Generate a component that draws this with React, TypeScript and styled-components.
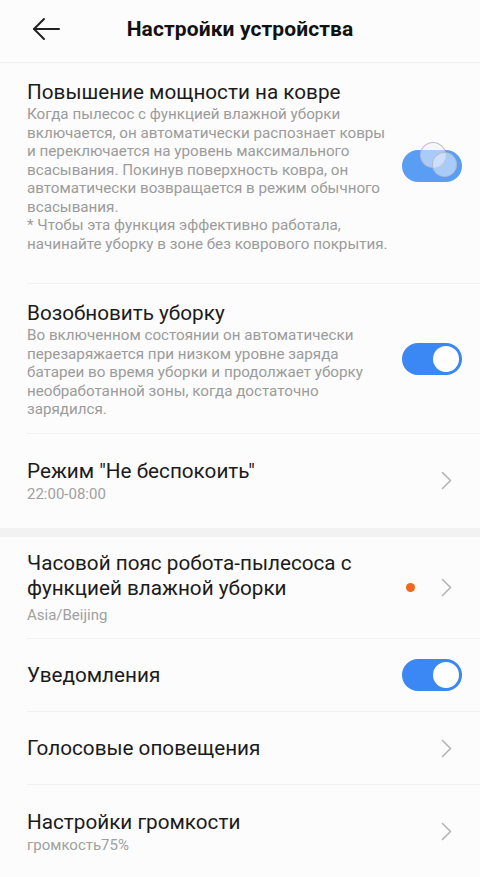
import React from "react";
import styled, { createGlobalStyle } from "styled-components";

const Global = createGlobalStyle`
  html, body { margin: 0; padding: 0; background: #fcfcfc; }
  body { font-family: Roboto, "Noto Sans", "Liberation Sans", sans-serif; -webkit-font-smoothing: antialiased; }
  * { box-sizing: border-box; }
`;

const Page = styled.div`
  width: 480px;
  min-height: 877px;
  background: #fcfcfc;
  overflow: hidden;
`;

const Header = styled.header`
  height: 63px;
  display: grid;
  grid-template-columns: 80px 1fr 80px;
  align-items: center;
  border-bottom: 1px solid #efefef;
`;

const BackButton = styled.button`
  border: 0;
  background: none;
  padding: 0 0 4px 32px;
  display: flex;
  align-items: center;
  cursor: pointer;
`;

const HeaderTitle = styled.h1`
  margin: 0 0 4px;
  text-align: center;
  font-size: 21px;
  font-weight: 700;
  color: #111;
  letter-spacing: 0.1px;
`;

const Row = styled.div<{ $pt?: number; $pb?: number; $divider?: boolean; $h?: number }>`
  display: flex;
  align-items: center;
  padding: ${(p) => p.$pt ?? 0}px 18px ${(p) => p.$pb ?? 0}px 27px;
  min-height: ${(p) => (p.$h ? `${p.$h}px` : "auto")};
  position: relative;
  &::after {
    content: "";
    display: ${(p) => (p.$divider ? "block" : "none")};
    position: absolute;
    left: 27px;
    right: 0;
    bottom: 0;
    height: 1px;
    background: #f1f1f1;
  }
`;

const TextCol = styled.div`
  flex: 1;
  min-width: 0;
`;

const Title = styled.div<{ $lh?: number }>`
  font-size: 20.7px;
  line-height: ${(p) => p.$lh ?? 26}px;
  color: #1b1b1b;
  white-space: nowrap;
`;

const Desc = styled.div`
  font-size: 15.2px;
  line-height: 18.5px;
  color: #9b9b9b;
  white-space: nowrap;
`;

const Sub = styled.div<{ $mt?: number }>`
  font-size: 15px;
  line-height: 18px;
  color: #a0a0a0;
  margin-top: ${(p) => p.$mt ?? 1}px;
`;

const Trailing = styled.div`
  display: flex;
  align-items: center;
  gap: 26px;
  flex-shrink: 0;
`;

const Track = styled.span<{ $faded?: boolean }>`
  position: relative;
  display: inline-block;
  width: 60px;
  height: 32px;
  border-radius: 16px;
  background: ${(p) => (p.$faded ? "#5a9df4" : "#3b87f3")};
`;

const Knob = styled.span<{ $x: number; $y: number; $ghost?: boolean; $size?: number }>`
  position: absolute;
  left: ${(p) => p.$x}px;
  top: ${(p) => p.$y}px;
  width: ${(p) => p.$size ?? 26}px;
  height: ${(p) => p.$size ?? 26}px;
  border-radius: 50%;
  background: ${(p) => (p.$ghost ? "rgba(235,241,252,0.55)" : "#ffffff")};
  border: ${(p) => (p.$ghost ? "1.8px solid rgba(180,180,195,0.85)" : "none")};
`;

const Dot = styled.span`
  width: 9px;
  height: 9px;
  border-radius: 50%;
  background: #f2661c;
`;

const ChevronWrap = styled.span`
  display: flex;
  margin-right: 10px;
`;

const Band = styled.div`
  height: 9px;
  background: #f2f2f2;
`;

const Toggle = ({ transition }: { transition?: boolean }) =>
  transition ? (
    <Track $faded>
      <Knob $ghost $x={18} $y={-8} $size={26} />
      <Knob $ghost $x={30} $y={2} $size={25} />
    </Track>
  ) : (
    <Track>
      <Knob $x={31} $y={3} />
    </Track>
  );

const Chevron = () => (
  <ChevronWrap>
    <svg width="11" height="19" viewBox="0 0 11 19" fill="none">
      <polyline points="1.5,1.5 9.5,9.5 1.5,17.5" stroke="#b3b3b3" strokeWidth="1.6" strokeLinecap="round" strokeLinejoin="round" />
    </svg>
  </ChevronWrap>
);

const BackArrow = () => (
  <svg width="28" height="24" viewBox="0 0 28 24" fill="none">
    <line x1="2" y1="12" x2="27" y2="12" stroke="#222" strokeWidth="2" strokeLinecap="round" />
    <polyline points="12,2 2,12 12,22" stroke="#222" strokeWidth="2" strokeLinecap="round" strokeLinejoin="round" />
  </svg>
);

const Lines = ({ lines }: { lines: string[] }) => (
  <>
    {lines.map((l, i) => (
      <Desc key={i}>{l}</Desc>
    ))}
  </>
);

export default function App() {
  return (
    <Page>
      <Global />
      <Header>
        <BackButton aria-label="back">
          <BackArrow />
        </BackButton>
        <HeaderTitle>Настройки устройства</HeaderTitle>
        <span />
      </Header>

      <Row $pt={16} $pb={31} $divider>
        <TextCol>
          <Title>Повышение мощности на ковре</Title>
          <Lines
            lines={[
              "Когда пылесос с функцией влажной уборки",
              "включается, он автоматически распознает ковры",
              "и переключается на уровень максимального",
              "всасывания. Покинув поверхность ковра, он",
              "автоматически возвращается в режим обычного",
              "всасывания.",
              "* Чтобы эта функция эффективно работала,",
              "начинайте уборку в зоне без коврового покрытия.",
            ]}
          />
        </TextCol>
        <Trailing>
          <Toggle transition />
        </Trailing>
      </Row>

      <Row $pt={16} $pb={15} $divider>
        <TextCol>
          <Title>Возобновить уборку</Title>
          <Lines
            lines={[
              "Во включенном состоянии он автоматически",
              "перезаряжается при низком уровне заряда",
              "батареи во время уборки и продолжает уборку",
              "необработанной зоны, когда достаточно",
              "зарядился.",
            ]}
          />
        </TextCol>
        <Trailing>
          <Toggle />
        </Trailing>
      </Row>

      <Row $pt={24} $pb={25}>
        <TextCol>
          <Title>Режим "Не беспокоить"</Title>
          <Sub>22:00-08:00</Sub>
        </TextCol>
        <Trailing>
          <Chevron />
        </Trailing>
      </Row>

      <Band />

      <Row $pt={14} $pb={15} $divider>
        <TextCol>
          <Title $lh={25}>
            Часовой пояс робота-пылесоса с
            <br />
            функцией влажной уборки
          </Title>
          <Sub $mt={5}>Asia/Beijing</Sub>
        </TextCol>
        <Trailing>
          <Dot />
          <Chevron />
        </Trailing>
      </Row>

      <Row $h={73} $divider>
        <TextCol>
          <Title>Уведомления</Title>
        </TextCol>
        <Trailing>
          <Toggle />
        </Trailing>
      </Row>

      <Row $h={73} $divider>
        <TextCol>
          <Title>Голосовые оповещения</Title>
        </TextCol>
        <Trailing>
          <Chevron />
        </Trailing>
      </Row>

      <Row $pt={24} $pb={20}>
        <TextCol>
          <Title>Настройки громкости</Title>
          <Sub>громкость75%</Sub>
        </TextCol>
        <Trailing>
          <Chevron />
        </Trailing>
      </Row>
    </Page>
  );
}
